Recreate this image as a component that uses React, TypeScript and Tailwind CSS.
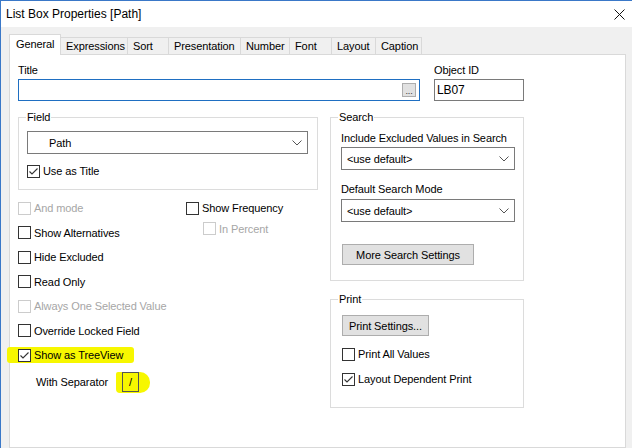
import React from "react";

function Box({ checked = false, disabled = false }: { checked?: boolean; disabled?: boolean }) {
  return (
    <span
      className={
        disabled
          ? "w-[13px] h-[13px] border border-[#cccccc] bg-white flex items-center justify-center shrink-0"
          : "w-[13px] h-[13px] border border-[#333333] bg-white flex items-center justify-center shrink-0"
      }
    >
      {checked && (
        <svg width="11" height="11" viewBox="0 0 11 11">
          <path d="M1.5 5.5 L4 8 L9.5 2.5" stroke="#333333" strokeWidth="1.1" fill="none" />
        </svg>
      )}
    </span>
  );
}

function Check({ label, checked = false, disabled = false }: { label: string; checked?: boolean; disabled?: boolean }) {
  return (
    <div className="flex items-center gap-[3px]">
      <Box checked={checked} disabled={disabled} />
      <span className={disabled ? "text-[#a6a6a6] whitespace-nowrap" : "whitespace-nowrap"}>{label}</span>
    </div>
  );
}

function Chevron() {
  return (
    <svg width="10" height="6" viewBox="0 0 10 6" className="shrink-0">
      <path d="M0.5 0.5 L5 5 L9.5 0.5" stroke="#555555" strokeWidth="1" fill="none" />
    </svg>
  );
}

function Dropdown({ value, indent }: { value: string; indent?: boolean }) {
  return (
    <div
      className={
        indent
          ? "h-[23px] w-full border border-[#7a7a7a] bg-white flex items-center justify-between pl-[21px] pr-[5px]"
          : "h-[23px] w-full border border-[#7a7a7a] bg-white flex items-center justify-between pl-[5px] pr-[5px]"
      }
    >
      <span>{value}</span>
      <Chevron />
    </div>
  );
}

const tabs: { label: string; w: string }[] = [
  { label: "Expressions", w: "w-[67px]" },
  { label: "Sort", w: "w-[41px]" },
  { label: "Presentation", w: "w-[72px]" },
  { label: "Number", w: "w-[49px]" },
  { label: "Font", w: "w-[42px]" },
  { label: "Layout", w: "w-[44px]" },
  { label: "Caption", w: "w-[46px]" },
];

export default function App() {
  return (
    <div className="w-[632px] h-[448px] overflow-hidden bg-[#f0f0f0] border-l border-t border-[#3a78c8] flex flex-col font-['Liberation_Sans',Arial,sans-serif] text-[11px] tracking-[-0.1px] leading-[16px] text-black">
      {/* title bar */}
      <div className="h-[26px] shrink-0 bg-white flex items-center justify-between pl-[5px] pr-[7px] text-[12px] tracking-normal">
        <span>List Box Properties [Path]</span>
        <svg width="11" height="11" viewBox="0 0 11 11">
          <path d="M0.5 0.5 L10.5 10.5 M10.5 0.5 L0.5 10.5" stroke="#111111" strokeWidth="1" />
        </svg>
      </div>

      {/* tabs */}
      <div className="shrink-0 pt-[7px] pl-[8px] flex items-end">
        <div className="relative z-10 h-[21px] w-[52px] -mb-px bg-white border-l border-t border-r border-[#d9d9d9] pl-[6px] pt-[1px]">
          General
        </div>
        {tabs.map((t) => (
          <div
            key={t.label}
            className={`${t.w} h-[17px] border-t border-r border-[#d9d9d9] bg-[#f0f0f0] pl-[5px] whitespace-nowrap`}
          >
            {t.label}
          </div>
        ))}
      </div>

      {/* panel */}
      <div className="ml-[8px] mr-[6px] flex-1 bg-white border border-[#d9d9d9] pl-[8px] pt-[7px]">
        {/* title row */}
        <div className="flex">
          <div className="w-[402px]">
            <div>Title</div>
            <div className="mt-[1px] h-[22px] border border-[#1f6fc2] flex items-center justify-end pr-[3px]">
              <div className="w-[14px] h-[14px] bg-[#e1e1e1] border border-[#adadad] flex items-end justify-center text-[9px] leading-[10px] text-[#333333]">
                ...
              </div>
            </div>
          </div>
          <div className="ml-[14px] w-[90px]">
            <div>Object ID</div>
            <div className="mt-[1px] h-[22px] border border-[#7a7a7a] flex items-center pl-[2px] text-[12px]">LB07</div>
          </div>
        </div>

        {/* main columns */}
        <div className="flex mt-[8px]">
          {/* left column */}
          <div className="w-[300px] shrink-0">
            <fieldset className="min-w-0 w-[300px] border border-[#dcdcdc] pl-[8px] pr-[9px] pb-[10px]">
              <legend className="-ml-[1px] px-[1px]">Field</legend>
              <div className="mt-[6px]">
                <Dropdown value="Path" indent />
              </div>
              <div className="mt-[9px] h-[16px] flex items-center">
                <Check label="Use as Title" checked />
              </div>
            </fieldset>

            <div className="flex mt-[6px]">
              <div className="w-[168px] flex flex-col">
                <div className="h-[24.5px] flex items-center">
                  <Check label="And mode" disabled />
                </div>
                <div className="h-[24.5px] flex items-center">
                  <Check label="Show Alternatives" />
                </div>
                <div className="h-[24.5px] flex items-center">
                  <Check label="Hide Excluded" />
                </div>
                <div className="h-[24.5px] flex items-center">
                  <Check label="Read Only" />
                </div>
                <div className="h-[24.5px] flex items-center">
                  <Check label="Always One Selected Value" disabled />
                </div>
                <div className="h-[24.5px] flex items-center">
                  <Check label="Override Locked Field" />
                </div>
                <div className="h-[24.5px] flex items-center">
                  <div className="-ml-[11px] pl-[11px] w-[127px] h-[16px] bg-[#f7f700] rounded-[3px] flex items-center">
                    <Check label="Show as TreeView" checked />
                  </div>
                </div>
              </div>
              <div className="flex flex-col">
                <div className="h-[24.5px] flex items-center">
                  <Check label="Show Frequency" />
                </div>
                <div className="h-[16px] flex items-center pl-[17px]">
                  <Check label="In Percent" disabled />
                </div>
              </div>
            </div>

            <div className="mt-[4px] h-[21px] flex items-start pl-[18px]">
              <span className="w-[80px] mt-[2px] whitespace-nowrap">With Separator</span>
              <div className="flex bg-[#f7f700] pl-[6px] pr-[11px] pb-[1px] rounded-tl-[2px] rounded-bl-[4px] rounded-r-[10px]">
                <div className="w-[17px] h-[20px] border border-[#555555] flex items-center justify-center">/</div>
              </div>
            </div>
          </div>

          {/* right column */}
          <div className="ml-[12px] w-[194px] shrink-0">
            <fieldset className="min-w-0 w-[194px] border border-[#dcdcdc] pl-[10px] pr-[8px] pb-[15px]">
              <legend className="-ml-[3px] px-[1px]">Search</legend>
              <div className="mt-[5px] whitespace-nowrap">Include Excluded Values in Search</div>
              <div className="mt-[1px]">
                <Dropdown value="<use default>" />
              </div>
              <div className="mt-[11px]">Default Search Mode</div>
              <div className="mt-[2px]">
                <Dropdown value="<use default>" />
              </div>
              <div className="mt-[22px] ml-[1px] w-[132px] h-[21px] bg-[#e1e1e1] border border-[#adadad] flex items-center justify-center">
                More Search Settings
              </div>
            </fieldset>

            <fieldset className="min-w-0 w-[194px] mt-[10px] border border-[#dcdcdc] pl-[11px] pr-[8px] pb-[20px]">
              <legend className="-ml-[4px] px-[1px]">Print</legend>
              <div className="mt-[8px] w-[87px] h-[21px] bg-[#e1e1e1] border border-[#adadad] flex items-center justify-center">
                Print Settings...
              </div>
              <div className="mt-[10px] h-[16px] flex items-center">
                <Check label="Print All Values" />
              </div>
              <div className="mt-[9px] h-[16px] flex items-center">
                <Check label="Layout Dependent Print" checked />
              </div>
            </fieldset>
          </div>
        </div>
      </div>
    </div>
  );
}
